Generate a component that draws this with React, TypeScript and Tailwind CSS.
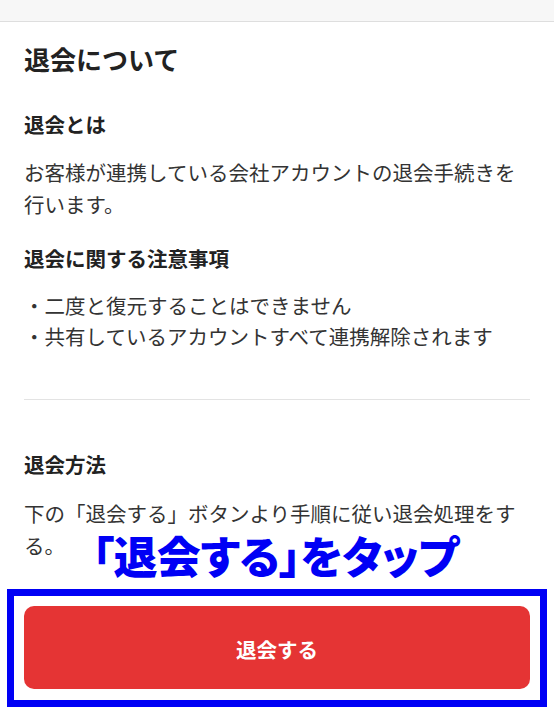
import React from "react";

export default function App() {
  const font = "font-['Noto_Sans_CJK_JP','Noto_Sans',sans-serif]";
  return (
    <div className={`relative w-[554px] min-h-[725px] bg-white text-[#333333] ${font}`}>
      <div className="h-[22px] bg-[#f7f7f7] border-b border-[#dedede]" />
      <div className="pl-6 pr-6">
        <h1 className="mt-[19px] text-[26px] leading-[36px] font-bold text-[#222222]">退会について</h1>
        <h2 className="mt-[32px] text-[20.5px] leading-[30px] font-bold text-[#222222]">退会とは</h2>
        <p className="mt-[17px] text-[20.5px] leading-[32px]">
          お客様が連携している会社アカウントの退会手続きを行います。
        </p>
        <h2 className="mt-[23px] text-[20.5px] leading-[30px] font-bold text-[#222222]">退会に関する注意事項</h2>
        <ul className="mt-[17px] text-[20.5px] leading-[31px]">
          <li>・二度と復元することはできません</li>
          <li>・共有しているアカウントすべて連携解除されます</li>
        </ul>
        <div className="mt-[47px] h-px bg-[#e3e3e3]" />
        <h2 className="mt-[49px] text-[20.5px] leading-[30px] font-bold text-[#222222]">退会方法</h2>
        <p className="mt-[18px] text-[20.5px] leading-[32px]">
          下の「退会する」ボタンより手順に従い退会処理をする。
        </p>
      </div>
      <div className="mt-[28px] mx-[7px] border-[7px] border-[#0000f5] px-[10px] pt-[10px] pb-[11px]">
        <button className="w-full h-[83px] rounded-[10px] bg-[#e53434] text-white text-[20.5px] font-bold flex items-center justify-center pt-[4px]">
          退会する
        </button>
      </div>
      <div className="absolute left-[92px] top-[525px] text-[44px] leading-[60px] font-black text-[#0000f5] tracking-[-0.6px] [font-feature-settings:'palt'] whitespace-nowrap">
        「退会する」をタップ
      </div>
    </div>
  );
}
